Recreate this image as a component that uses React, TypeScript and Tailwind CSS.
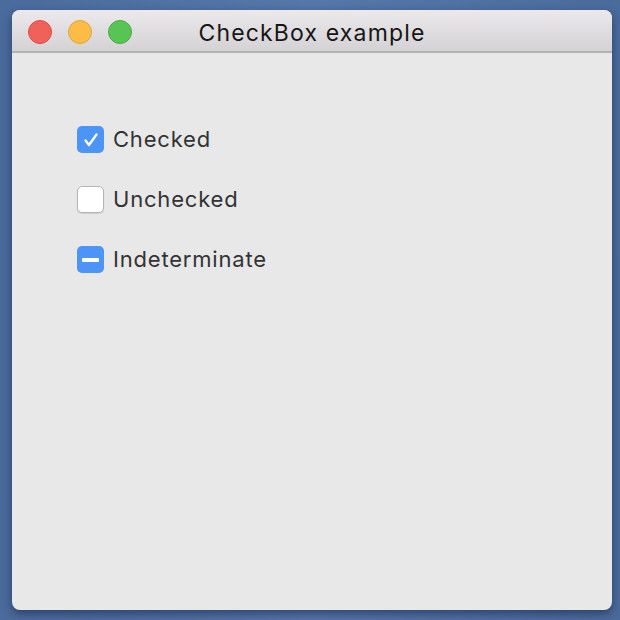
import React from "react";

function Box({ state }: { state: "checked" | "unchecked" | "indeterminate" }) {
  if (state === "unchecked") {
    return <div className="w-[27px] h-[27px] rounded-[5px] bg-white border border-[#b5b5b5] shadow-[0_1px_1px_rgba(0,0,0,0.12)]" />;
  }
  return (
    <div className="w-[27px] h-[27px] rounded-[5px] bg-[#4d94f7] flex items-center justify-center">
      {state === "checked" ? (
        <svg width="20" height="20" viewBox="0 0 20 20">
          <path d="M4.5 10.5 L8 15 L15.5 4.5" fill="none" stroke="white" strokeWidth="2.3" strokeLinecap="round" strokeLinejoin="round" />
        </svg>
      ) : (
        <div className="w-[17px] h-[4px] bg-white rounded-[1px]" />
      )}
    </div>
  );
}

export default function App() {
  const items: { label: string; state: "checked" | "unchecked" | "indeterminate" }[] = [
    { label: "Checked", state: "checked" },
    { label: "Unchecked", state: "unchecked" },
    { label: "Indeterminate", state: "indeterminate" },
  ];
  return (
    <div className="w-[620px] h-[620px] bg-[linear-gradient(90deg,#4a6b9c,#5577aa_50%,#4a6b9c)] pt-[10px] pl-[12px] overflow-hidden" style={{ fontFamily: "Inter, 'Liberation Sans', sans-serif" }}>
      <div className="w-[600px] h-[600px] rounded-[8px] overflow-hidden bg-[#e8e8e8] shadow-[0_4px_10px_rgba(20,30,60,0.55)] flex flex-col">
        <div className="h-[43px] shrink-0 bg-[linear-gradient(180deg,#ebe9eb,#d4d2d4)] border-b-2 border-[#b4b3b4] relative flex items-center justify-center">
          <div className="absolute left-[16px] top-[10px] flex gap-[16px]">
            <div className="w-[24px] h-[24px] rounded-full bg-[#f0615a] border border-[#e04a43]" />
            <div className="w-[24px] h-[24px] rounded-full bg-[#fbbd45] border border-[#e3a43a]" />
            <div className="w-[24px] h-[24px] rounded-full bg-[#58c453] border border-[#48ad3f]" />
          </div>
          <span className="text-[23px] text-[#161616] tracking-[1.15px] mt-[5px] ml-[0px] leading-none">CheckBox example</span>
        </div>
        <div className="pt-[73px] pl-[65px] flex flex-col gap-[33px]">
          {items.map((it) => (
            <div key={it.label} className="flex items-center gap-[9px] h-[27px]">
              <Box state={it.state} />
              <span className="text-[22px] text-[#333333] tracking-[0.8px]">{it.label}</span>
            </div>
          ))}
        </div>
      </div>
    </div>
  );
}
